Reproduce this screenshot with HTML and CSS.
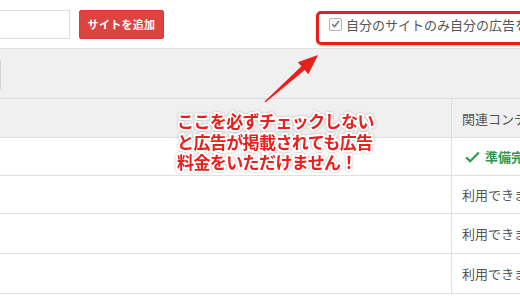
FILE: index.html
```html
<!DOCTYPE html>
<html lang="ja">
<head>
<meta charset="utf-8">
<link rel="stylesheet" href="styles.css">
</head>
<body>
<div class="page">
  <div class="toolbar">
    <div class="site-input"></div>
    <button class="btn-add">サイトを追加</button>
    <label class="own-only"><span class="cb"><svg viewBox="0 0 12 12" width="12" height="12"><path d="M2.5 6.2 L5 8.8 L9.8 2.6" fill="none" stroke="#777" stroke-width="1.6"/></svg></span>自分のサイトのみ自分の広告を表示する</label>
  </div>
  <div class="filterbar"><div class="filter-box"></div></div>
  <div class="sites">
    <div class="row head"><div class="cell"></div><div class="cell">関連コンテンツ</div></div>
    <div class="row"><div class="cell"></div><div class="cell ready"><svg class="tick" viewBox="0 0 15 12" width="15" height="12"><path d="M1.2 6.4 L5.2 10.2 L13.8 1.4" fill="none" stroke="#2e9a50" stroke-width="2.2"/></svg>準備完了</div></div>
    <div class="row"><div class="cell"></div><div class="cell">利用できません</div></div>
    <div class="row tall"><div class="cell"></div><div class="cell">利用できません</div></div>
    <div class="row tall"><div class="cell"></div><div class="cell">利用できません</div></div>
  </div>
</div>
<div class="callout-box"></div>
<svg class="arrow" width="520" height="300" viewBox="0 0 520 300">
  <polygon points="318,55 308.4,74.2 304.8,70.1 265.4,102.4 264.6,101.6 301.4,66.3 297.8,62.2" fill="#e8201c"/>
</svg>
<p class="note">ここを必ずチェックしない<br>と広告が掲載されても広告<br>料金をいただけません！</p>
</body>
</html>
```

FILE: styles.css
```css
html, body {
  margin: 0;
  padding: 0;
}
body {
  width: 520px;
  height: 300px;
  overflow: hidden;
  position: relative;
  background: #fff;
  font-family: "Noto Sans CJK JP", "Noto Sans", sans-serif;
  color: #555;
}
.page {
  width: 520px;
  overflow: hidden;
}
.toolbar {
  height: 48px;
  display: flex;
  align-items: center;
  white-space: nowrap;
}
.site-input {
  flex: none;
  margin-left: -100px;
  width: 168px;
  height: 27px;
  border: 1px solid #dedede;
  background: #fff;
}
.btn-add {
  flex: none;
  margin-left: 9px;
  height: 29px;
  width: 85px;
  padding: 0;
  border: 1px solid #d83a36;
  border-radius: 2px;
  background: #dd433f;
  color: #fff;
  font-family: inherit;
  font-size: 11px;
  font-weight: bold;
  letter-spacing: 0.3px;
}
.own-only {
  flex: none;
  margin-left: 165px;
  display: flex;
  align-items: center;
  font-size: 13px;
  color: #555;
}
.cb {
  width: 11px;
  height: 11px;
  border: 1px solid #b8b8b8;
  border-radius: 2px;
  background: #f6f6f6;
  margin-right: 4px;
  display: flex;
}
.cb svg {
  margin: -1px 0 0 0;
}
.filterbar {
  height: 49px;
  background: #f0f0f0;
  border-top: 1px solid #e2e2e2;
  border-bottom: 1px solid #dcdcdc;
  display: flex;
  align-items: flex-start;
}
.filter-box {
  margin-left: -99px;
  margin-top: 11px;
  width: 98px;
  height: 27px;
  border: 1px solid #d4d4d4;
  background: #f6f6f6;
}
.sites {
  display: flex;
  flex-direction: column;
}
.row {
  display: grid;
  grid-template-columns: 451px 1fr;
  height: 37px;
  border-bottom: 1px solid #e0e0e0;
  background: #fff;
}
.row.head {
  height: 38px;
  background: #f0f0f0;
}
.row.tall {
  height: 39px;
}
.cell {
  display: flex;
  align-items: center;
  white-space: nowrap;
  font-size: 13px;
  color: #555;
  overflow: hidden;
}
.cell + .cell {
  border-left: 1px solid #dedede;
  padding-left: 10px;
}
.ready {
  color: #2e9a50;
  font-weight: bold;
}
.tick {
  flex: none;
  margin: 0 5px 0 3px;
}
.callout-box {
  position: absolute;
  left: 316px;
  top: 11px;
  width: 230px;
  height: 28px;
  border: 3px solid #e8201c;
  border-radius: 5px;
  box-shadow: 0 1px 2px rgba(0,0,0,0.25);
}
.arrow {
  position: absolute;
  left: 0;
  top: 0;
}
.note {
  position: absolute;
  left: 177px;
  top: 111px;
  margin: 0;
  font-size: 17px;
  line-height: 20.5px;
  font-weight: bold;
  color: #e8201c;
  -webkit-text-stroke: 4px #fff;
  paint-order: stroke fill;
  filter: drop-shadow(0 0 1px rgba(0,0,0,0.25));
  letter-spacing: -0.6px;
}
```
